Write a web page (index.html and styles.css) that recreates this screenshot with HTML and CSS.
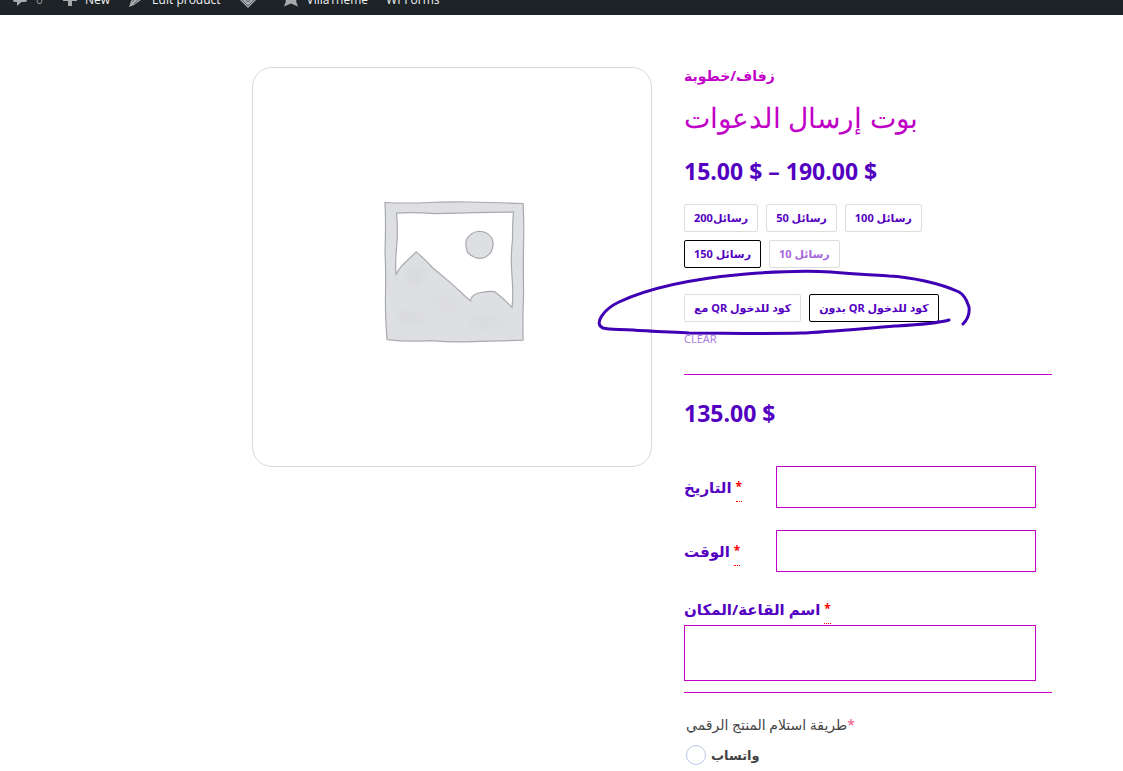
FILE: index.html
```html
<!DOCTYPE html>
<html lang="en">
<head>
    <meta charset="UTF-8">
    <meta name="viewport" content="width=device-width, initial-scale=1.0">
    <title>بوت إرسال الدعوات</title>
    <link rel="stylesheet" href="styles.css">
</head>
<body>
<nav class="admin-bar">
    <a href="#" class="admin-item">
        <svg width="16" height="20" viewBox="0 0 16 20"><path d="M3 3h10a2 2 0 0 1 2 2v6a2 2 0 0 1-2 2H9.500L5 17v-4H3a2 2 0 0 1-2-2V5a2 2 0 0 1 2-2z"/></svg>
        <span class="count">0</span>
    </a>
    <a href="#" class="admin-item">
        <svg width="16" height="20" viewBox="0 0 16 20"><path d="M7 4h4v5h5v3h-5v5H7v-5H2V9h5z"/></svg>
        New
    </a>
    <a href="#" class="admin-item admin-edit">
        <svg width="16" height="20" viewBox="0 0 16 20"><path d="M11 3l4 4-2 4-7 5-5 2 2-6z"/><path class="line" d="M4 13l6-6M6 15l6-6"/></svg>
        Edit product
    </a>
    <a href="#" class="admin-item admin-logo" aria-label="Theme">
        <svg width="18" height="20" viewBox="0 0 18 20"><path d="M0 10l9 9 9-9-9-9z"/><path class="line" d="M2 10l7 7 7-7M5 9l4 4 4-4"/></svg>
    </a>
    <a href="#" class="admin-item admin-villa">
        <svg width="16" height="20" viewBox="0 0 16 20"><path d="M8 2l2 5 6 1-3 4 2 5.500-7-3-7 3L3 12 0 8l6-1z"/></svg>
        VillaTheme
    </a>
    <a href="#" class="admin-item">WPForms</a>
</nav>

<main class="product">
    <div class="gallery">
        <svg class="placeholder" viewBox="0 0 140 140" role="img" aria-label="Placeholder">
            <defs>
                <filter id="wash" x="-20%" y="-20%" width="140%" height="140%"><feGaussianBlur stdDeviation="5"/></filter>
            </defs>
            <path class="shape" fill-rule="evenodd" d="M1 1.500Q24 2.500 44 1.500T86 1t52 1.500Q139 22 138.500 42t0 50q-1 24-.5 46-28 1-50 1.500-20 1-42-1-22 1.500-43-1Q1 112 1.500 92 2 72 1 50 2 24 1 1.500zM12.500 12Q14 30 12.500 46T12 72.500Q17 64 22 60L32 50.500Q41 58 48 66L67 82 80 94Q83 97 86 99 86 94 93 91.500 103 89 110 90q8 6 17 15.500 1.500-11 0-31t.5-36q0-18 1-27.500-22 0-38 .5t-40 1Q28 11 12.500 12z"/>
            <path class="shape" d="M94 30q9 0 13 7 3 7-1 14-5 6-11 6-8-1-12-6-3-7-1-13 4-7 12-8z"/>
            <g class="wash" filter="url(#wash)">
                <path d="M20 75l14-14 8 16-14 12zM45 90l22 8 8 14-20-7zM10 106l26 6 8 12-28-4zM80 118l24-8 18 10-28 8z"/>
            </g>
        </svg>
    </div>

    <div class="summary">
        <a href="#" class="category">زفاف/خطوبة</a>
        <h1 class="title">بوت إرسال الدعوات</h1>
        <p class="price">15.00 $ – 190.00 $</p>

        <div class="variations">
            <div class="swatches">
                <button type="button" class="swatch">رسائل200</button>
                <button type="button" class="swatch">رسائل 50</button>
                <button type="button" class="swatch">رسائل 100</button>
                <button type="button" class="swatch selected">رسائل 150</button>
                <button type="button" class="swatch" disabled>رسائل 10</button>
            </div>
            <div class="swatches">
                <button type="button" class="swatch">مع QR كود للدخول</button>
                <button type="button" class="swatch selected">بدون QR كود للدخول</button>
            </div>
            <a href="#" class="clear">CLEAR</a>
            <!-- hand drawn loop around the QR options -->
            <svg class="loop" width="380" height="72" viewBox="0 0 380 72" aria-hidden="true">
                <path d="M354 54C340 58 319 59 300 60C262 63 230 66 206 67C165 68 130 67 94 67C75 66 50 65 38 64C23 63 15 64 8 62C-2 58 9 43 24 36C60 19 105 12 151 8C188 5 220 5 236 6C260 8 280 9 294 10C315 11 345 17 364 26C371 30 372 36 374 41C375 49 372 54 368 58"/>
            </svg>
        </div>

        <p class="price variation-price">135.00 $</p>

        <form class="fields">
            <div class="field">
                <label for="date">التاريخ <abbr title="required">*</abbr></label>
                <input type="text" id="date">
            </div>
            <div class="field">
                <label for="time">الوقت <abbr title="required">*</abbr></label>
                <input type="text" id="time">
            </div>
            <div class="field stacked">
                <label for="place">اسم القاعة/المكان <abbr title="required">*</abbr></label>
                <textarea id="place"></textarea>
            </div>
            <fieldset class="delivery">
                <legend>طريقة استلام المنتج الرقمي<span class="star">*</span></legend>
                <div class="option">
                    <input type="radio" name="delivery" id="whatsapp">
                    <label for="whatsapp">واتساب</label>
                </div>
            </fieldset>
        </form>
    </div>
</main>
</body>
</html>
```

FILE: styles.css
```css
* {
    box-sizing: border-box;
}

body {
    margin: 0;
    background-color: #ffffff;
    color: #5300c1;
    font-family: "Noto Sans", "DejaVu Sans", sans-serif;
    overflow: hidden;
}

.admin-bar {
    display: flex;
    align-items: center;
    height: 32px;
    margin-top: -17px;
    padding-left: 12px;
    background-color: #1d2327;
    font-family: "Open Sans", sans-serif;
    font-size: 12px;
}

.admin-item {
    display: flex;
    flex-shrink: 0;
    align-items: center;
    gap: 8px;
    margin-right: 18px;
    color: #f0f0f1;
    text-decoration: none;
}

.admin-item svg {
    flex-shrink: 0;
    fill: #a7aaad;
}

.admin-item .line {
    fill: none;
    stroke: #5d6468;
}

.count {
    color: #8c8f94;
}

.admin-logo {
    margin-right: 26px;
}

.product {
    display: grid;
    grid-template-columns: 25fr 23fr;
    align-items: start;
    gap: 32px;
    padding: 52px 71px 0 252px;
}

.gallery {
    display: flex;
    align-items: center;
    justify-content: center;
    aspect-ratio: 1;
    padding: 10px 0 0 6px;
    border: 1px solid #d9d9d9;
    border-radius: 20px;
}

.placeholder {
    width: 36%;
}

.placeholder .shape {
    fill: #dedfe3;
    stroke: #a9aaaf;
    stroke-width: 1.2;
}

.placeholder .wash {
    fill: #d2d3d8;
    opacity: 0.4;
}

.category {
    display: block;
    color: #c100c7;
    font-size: 14px;
    font-weight: bold;
    line-height: 18px;
    text-decoration: none;
}

.title {
    margin: 12px 0 16px;
    color: #c100c7;
    font-size: 28px;
    font-weight: 300;
    line-height: 40px;
}

.price {
    margin: 0;
    font-family: "Open Sans", sans-serif;
    font-size: 23px;
    font-weight: bold;
    line-height: 36px;
}

.variations {
    position: relative;
    margin-top: 15px;
    padding-bottom: 26px;
    border-bottom: 1px solid #c100c7;
}

.swatches {
    display: flex;
    flex-wrap: wrap;
    gap: 8px;
    max-width: 280px;
    margin-bottom: 26px;
}

.swatches + .swatches {
    margin-bottom: 8px;
}

.swatch {
    height: 28px;
    padding: 0 9px;
    background-color: #ffffff;
    border: 1px solid #dddddd;
    border-radius: 2px;
    color: #5300c1;
    font-family: inherit;
    font-size: 11px;
    font-weight: bold;
    line-height: 24px;
}

.swatch.selected {
    border-color: #000000;
}

.swatch:disabled {
    color: #a566dd;
}

.clear {
    display: block;
    color: #a87fe0;
    font-size: 11px;
    line-height: 18px;
    text-decoration: none;
}

.loop {
    position: absolute;
    top: 62px;
    left: -89px;
    fill: none;
    stroke: #3f00b5;
    stroke-width: 3;
    stroke-linecap: round;
    pointer-events: none;
}

.variation-price {
    margin: 20px 0 35px;
}

.field {
    display: flex;
    align-items: center;
    margin: 0 16px 22px 0;
    font-size: 15px;
    font-weight: bold;
}

.field label {
    flex: 0 0 92px;
    line-height: 30px;
}

.field abbr {
    padding-bottom: 6px;
    border-bottom: 1px dotted #ff0000;
    color: #ff0000;
    font-size: 12px;
    line-height: 1;
    text-decoration: none;
    vertical-align: 2px;
}

.field input,
.field textarea {
    flex: 1;
    min-width: 0;
    height: 42px;
    padding: 0 10px;
    background-color: #ffffff;
    border: 1px solid #c100c7;
    border-radius: 0;
    font: inherit;
}

.stacked {
    display: block;
    margin-bottom: 11px;
}

.stacked label {
    display: block;
    margin-bottom: 1px;
}

.field.stacked textarea {
    display: block;
    width: 100%;
    height: 56px;
    resize: none;
}

.delivery {
    margin: 0;
    padding: 20px 0 0 2px;
    border: 0;
    border-top: 1px solid #c100c7;
    color: #444444;
    font-size: 14px;
}

.delivery legend {
    float: left;
    width: 100%;
    margin-bottom: 8px;
    padding: 0;
    line-height: 24px;
}

.option {
    display: flex;
    clear: both;
    align-items: center;
    gap: 5px;
    font-size: 13px;
    font-weight: bold;
}

.option input {
    appearance: none;
    width: 20px;
    height: 20px;
    margin: 0;
    border: 1px solid #b8c8e6;
    border-radius: 50%;
}

.star {
    color: #ee5588;
}
```
